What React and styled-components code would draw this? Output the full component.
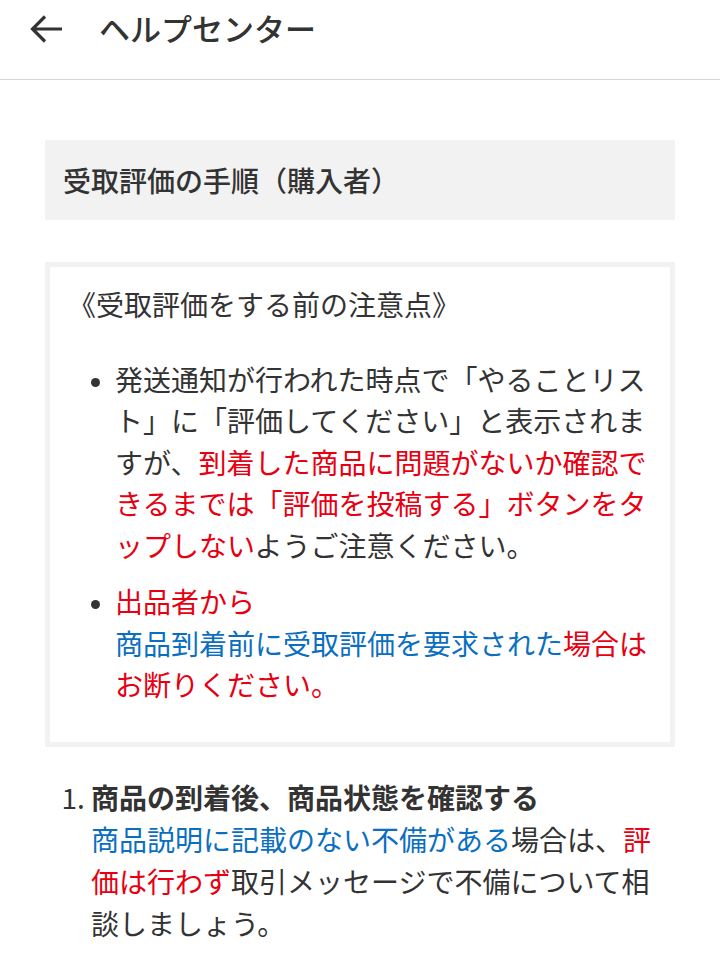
import React from "react";
import styled, { createGlobalStyle } from "styled-components";

const GlobalStyle = createGlobalStyle`
	html, body {
		margin: 0;
		padding: 0;
		background: #fff;
	}

	body {
		font-family: "Noto Sans CJK JP", "Noto Sans", sans-serif;
		color: #333;
	}
`;

const Header = styled.header`
	display: flex;
	align-items: flex-start;
	box-sizing: border-box;
	height: 80px;
	padding: 6px 0 0 30px;
	border-bottom: 1px solid #d6d6d6;

	svg {
		margin-top: 8px;
		margin-right: 35px;
		flex-shrink: 0;
	}
`;

const Title = styled.h1`
	margin: 0;
	font-size: 31px;
	font-weight: 500;
	line-height: 44px;
	color: #333;
`;

const Content = styled.main`
	padding: 60px 45px 40px;
`;

const SectionHeading = styled.h2`
	margin: 0;
	display: flex;
	align-items: center;
	height: 80px;
	padding: 0 18px;
	background: #f2f2f2;
	font-size: 28px;
	font-weight: 500;
	color: #333;
`;

const Notice = styled.div`
	margin-top: 42px;
	border: 5px solid #f2f2f2;
	padding: 17px 20px 36px 18px;
	font-size: 28px;
	line-height: 41.5px;
`;

const NoticeTitle = styled.p`
	margin: 0;
`;

const Bullets = styled.ul`
	margin: 33px 0 0;
	padding-left: 47px;

	li {
		margin-bottom: 15px;
	}

	li:last-child {
		margin-bottom: 0;
	}

	li::marker {
		font-size: 22px;
	}
`;

const Steps = styled.ol`
	margin: 29px 0 0;
	padding-left: 46px;
	font-size: 28px;
	line-height: 42px;

	li::marker {
		font-weight: 400;
	}
`;

const StepTitle = styled.strong`
	display: block;
	font-weight: 700;
`;

const Mark = styled.span`
	color: ${props => (props.tone === "blue" ? "#0b6fc0" : "#e60012")};
`;

const BackIcon = () => (
	<svg width="34" height="30" viewBox="0 0 34 30" fill="none">
		<path
			d="M32 15H3M15 2.5 2.5 15 15 27.5"
			stroke="#333"
			strokeWidth="3.2"
			strokeLinecap="butt"
			strokeLinejoin="miter"
		/>
	</svg>
);

const App = () => (
	<>
		<GlobalStyle />
		<Header>
			<BackIcon />
			<Title>ヘルプセンター</Title>
		</Header>

		<Content>
			<SectionHeading>受取評価の手順（購入者）</SectionHeading>

			<Notice>
				<NoticeTitle>《受取評価をする前の注意点》</NoticeTitle>
				<Bullets>
					<li>
						発送通知が行われた時点で「やることリスト」に「評価してください」と表示されますが、
						<Mark>到着した商品に問題がないか確認できるまでは「評価を投稿する」ボタンをタップしない</Mark>
						ようご注意ください。
					</li>
					<li>
						<Mark>出品者から</Mark>
						<br />
						<Mark tone="blue">商品到着前に受取評価を要求された</Mark>
						<Mark>場合はお断りください。</Mark>
					</li>
				</Bullets>
			</Notice>

			<Steps>
				<li>
					<StepTitle>商品の到着後、商品状態を確認する</StepTitle>
					<Mark tone="blue">商品説明に記載のない不備がある</Mark>
					場合は、
					<Mark>評価は行わず</Mark>
					取引メッセージで不備について相談しましょう。
				</li>
			</Steps>
		</Content>
	</>
);

export default App;
